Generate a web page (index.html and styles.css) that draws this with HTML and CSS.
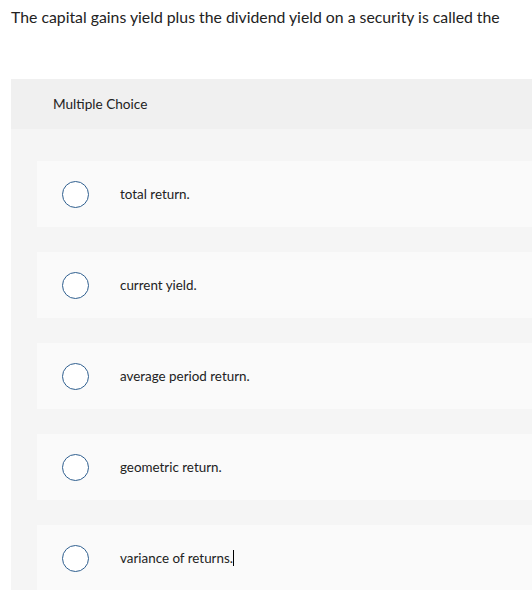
FILE: index.html
```html
<!DOCTYPE html>
<html>
<head>
<meta charset="utf-8">
<link rel="stylesheet" href="styles.css">
</head>
<body>
<p class="question">The capital gains yield plus the dividend yield on a security is called the</p>
<div class="quiz">
  <div class="quiz-head">Multiple Choice</div>
  <div class="options">
    <div class="option"><span class="radio"></span><span class="label">total return.</span></div>
    <div class="option"><span class="radio"></span><span class="label">current yield.</span></div>
    <div class="option"><span class="radio"></span><span class="label">average period return.</span></div>
    <div class="option"><span class="radio"></span><span class="label">geometric return.</span></div>
    <div class="option"><span class="radio"></span><span class="label">variance of returns.<span class="caret"></span></span></div>
  </div>
</div>
</body>
</html>
```
FILE: styles.css
```css
html, body {
  margin: 0;
  padding: 0;
  background: #ffffff;
  font-family: "Lato", "Open Sans", sans-serif;
  color: #222222;
}
.question {
  margin: 0;
  padding: 7px 0 0 11px;
  font-size: 15.8px;
  line-height: 19px;
  height: 72px;
}
.quiz {
  margin-left: 11px;
  background: #f5f5f5;
}
.quiz-head {
  background: #f0f0f0;
  height: 50px;
  display: flex;
  align-items: center;
  padding-left: 42px;
  font-size: 13.6px;
}
.options {
  display: flex;
  flex-direction: column;
  gap: 25px;
  padding: 32px 0 0 26px;
}
.option {
  background: #fafafa;
  height: 66px;
  display: flex;
  align-items: center;
}
.radio {
  width: 25px;
  height: 25px;
  border: 1.5px solid #2f5f8f;
  border-radius: 50%;
  background: #ffffff;
  margin-left: 25px;
  flex: none;
}
.label {
  margin-left: 31px;
  font-size: 13.4px;
}
.caret {
  display: inline-block;
  width: 1px;
  height: 16px;
  background: #000;
  vertical-align: -3px;
}
```
